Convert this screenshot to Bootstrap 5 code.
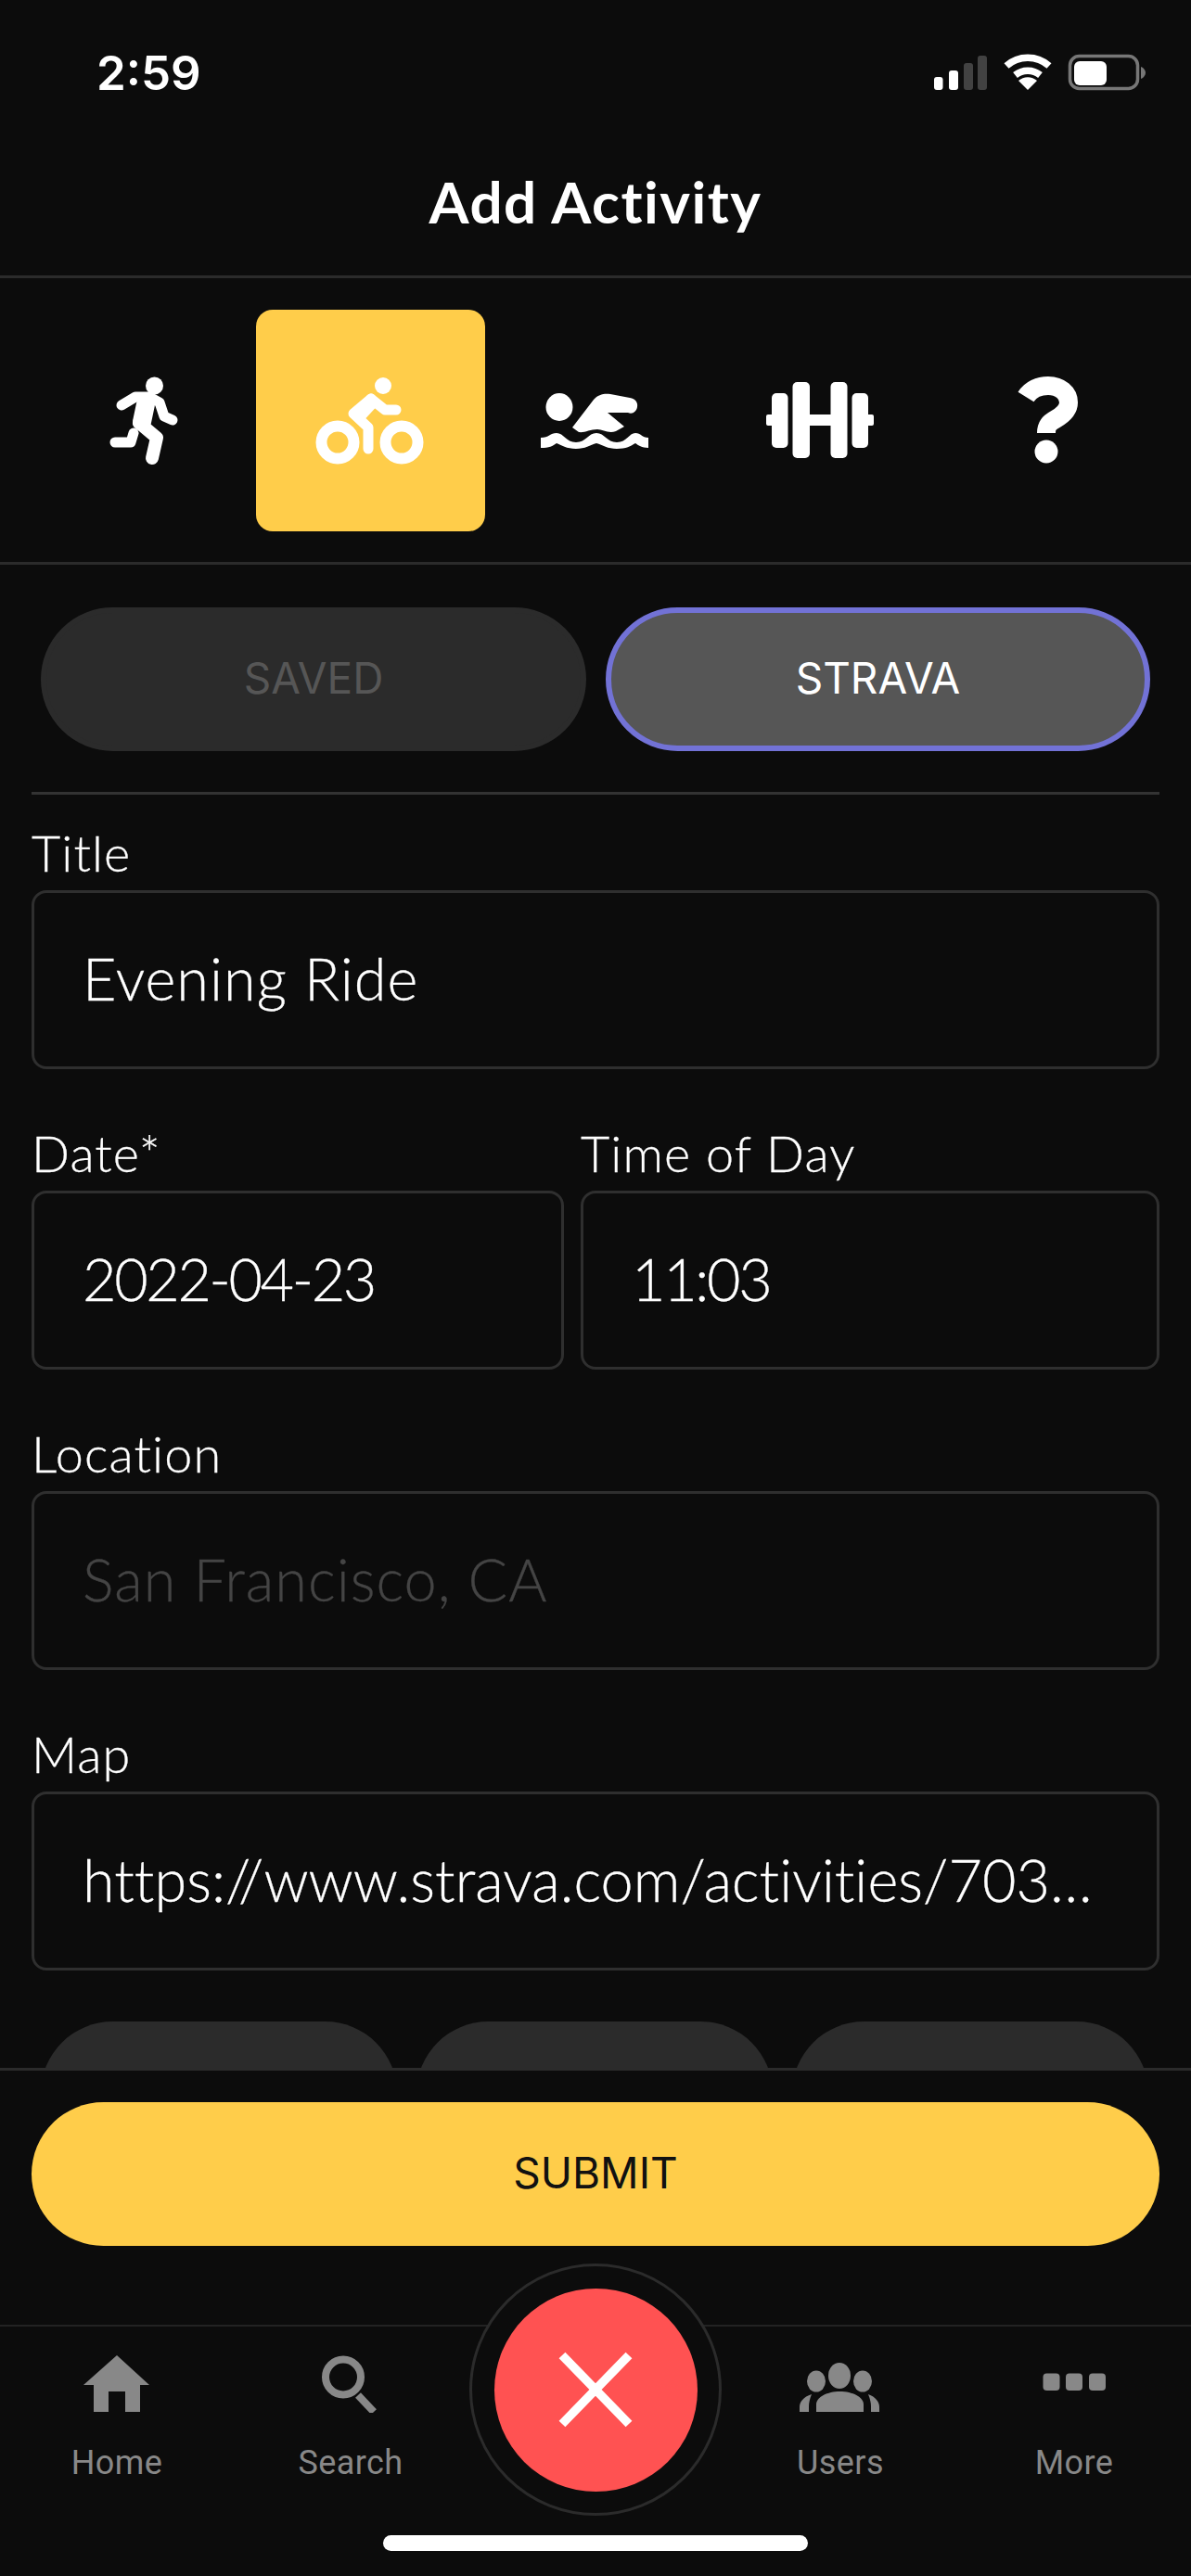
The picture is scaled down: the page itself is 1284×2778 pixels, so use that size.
<!DOCTYPE html>
<html lang="en">
<head>
  <meta charset="UTF-8">
  <title>Add Activity</title>
  <link rel="stylesheet" href="https://cdn.jsdelivr.net/npm/bootstrap@5.3.0/dist/css/bootstrap.min.css">
  <style>
    body { background: #0c0c0c; color: #fff; font-family: "Lato", sans-serif; }
    .app-screen { width: 1284px; height: 2778px; overflow: hidden; background: #0c0c0c; }
    .status-row { height: 157px; padding: 0 48px 0 104px; }
    .status-time { font: 600 51px/1 "Inter", sans-serif; }
    .page-title { height: 143px; margin: 0; padding-bottom: 20px; font: 700 62px/120px "Lato", sans-serif; letter-spacing: 1.5px; text-align: center; border-bottom: 3px solid #2b2b2b; }
    .type-row { display: grid; grid-template-columns: 244px 247px repeat(3, 243px); height: 309px; padding: 34px 32px 33px; border-bottom: 3px solid #2b2b2b; }
    .type-tile { height: 239px; padding: 0; border: 0; border-radius: 18px; background: transparent; }
    .type-tile.is-active { background: #ffcd4a; }
    .form-area { min-height: 0; padding: 46px 34px 0; }
    .source-pill { height: 155px; padding: 0 0 3px; font: 400 46px/1 "Inter", sans-serif; border-width: 6px; }
    .source-saved, .source-saved:disabled { width: 588px; margin-left: 10px; color: #565656; background: #2b2b2b; border-color: #2b2b2b; opacity: 1; }
    .source-strava { width: 587px; margin-right: 10px; color: #fff; background: #565656; border-color: #7272d6; }
    .form-rule { margin: 44px 0 29px; border-top: 3px solid #333; opacity: 1; }
    .field-label { height: 68px; margin-bottom: 6px; font: 300 54px/68px "Lato", sans-serif; font-variant-ligatures: none; letter-spacing: 1.1px; -webkit-text-stroke: .3px #fff; color: #fff; }
    .field-box, .field-box:focus { height: 193px; padding: 0 52px 5px; font: 300 63px/1 "Lato", sans-serif; font-variant-ligatures: none; letter-spacing: 1px; -webkit-text-stroke: .3px currentColor; white-space: nowrap; color: #fff; background: #0c0c0c; border: 3px solid #2f2f2f; border-radius: 16px; }
    .field-box.is-empty { color: #444; }
    .field-box.is-numeric { letter-spacing: -2.4px; }
    .field-box.is-url { letter-spacing: 0; }
    .field-gap { margin-bottom: 57px; }
    .date-col { width: 574px; }
    .time-col { width: 624px; }
    .extra-row { margin-top: -2px; padding: 0 12px 0 10px; }
    .extra-pill { width: 384px; height: 155px; background: #2b2b2b; border: 0; }
    .footer-bar { padding: 34px 34px 85px; border-top: 3px solid #2b2b2b; }
    .submit-btn, .submit-btn:hover { height: 155px; padding: 0 0 3px; font: 400 46px/1 "Inter", sans-serif; color: #111; background: #ffcd4a; border: 0; }
    .tab-bar { display: grid; grid-template-columns: 252px 252px 276px 252px 252px; border-top: 2px solid #232323; }
    .tab-item { padding-top: 31px; color: #888; font: 400 36px/44px "Roboto", sans-serif; letter-spacing: .4px; text-align: center; }
    .tab-item svg { display: block; margin-bottom: 32px; }
    .fab-slot { position: relative; }
    .fab-ring { position: absolute; top: -68px; left: 2px; width: 272px; height: 272px; background: #0c0c0c; border: 3px solid #2b2b2b; }
    .fab-btn { width: 219px; height: 219px; padding: 0; background: #ff5252; border: 0; }
    .home-bar { width: 458px; height: 18px; margin: 56px auto 27px; background: #fff; }
  </style>
</head>
<body>
  <div class="app-screen d-flex flex-column">

    <div class="status-row d-flex justify-content-between align-items-center">
      <span class="status-time">2:59</span>
      <svg width="240" height="157" viewBox="996 0 240 157" aria-hidden="true">
        <rect x="1007" y="83" width="9.500" height="14" rx="3" fill="#fff"/>
        <rect x="1023" y="76" width="10" height="21" rx="3" fill="#fff"/>
        <rect x="1039" y="68" width="10" height="29" rx="3" fill="#424242"/>
        <rect x="1054" y="60" width="10" height="37" rx="3" fill="#424242"/>
        <path d="M1085 71A34.500 34.500 0 0 1 1131 71M1094.500 81A21.500 21.500 0 0 1 1121.500 81" fill="none" stroke="#fff" stroke-width="7.500"/>
        <path d="M1108 97L1098 87A15 15 0 0 1 1118 87Z" fill="#fff"/>
        <rect x="1153.500" y="60.500" width="73" height="35" rx="10" fill="none" stroke="#777" stroke-width="3.500"/>
        <rect x="1158" y="66" width="35" height="26" rx="6" fill="#fff"/>
        <path d="M1230 72C1233 73 1235 76 1235 78.500C1235 81 1233 84 1230 85Z" fill="#777"/>
      </svg>
    </div>

    <h1 class="page-title">Add Activity</h1>

    <div class="type-row">
      <button class="type-tile" type="button" aria-label="Run">
        <svg class="d-block" width="244" height="239" viewBox="32 334 244 239">
          <circle cx="166.500" cy="416" r="9.500" fill="#fff"/>
          <g fill="none" stroke="#fff" stroke-linecap="round" stroke-linejoin="round">
            <path d="M131 437L146 428H161L172 434L177 449L186 453" stroke-width="11"/>
            <path d="M158 433L150 456L169 472L164 494" stroke-width="14"/>
            <path d="M124 477H141L144 467" stroke-width="11"/>
            <path d="M157 436L153 455" stroke-width="20"/>
          </g>
        </svg>
      </button>
      <button class="type-tile is-active" type="button" aria-label="Ride">
        <svg class="d-block" width="247" height="239" viewBox="276 334 247 239">
          <circle cx="413" cy="416" r="9" fill="#fff"/>
          <g fill="none" stroke="#fff">
            <circle cx="364" cy="477" r="17.500" stroke-width="12"/>
            <circle cx="433" cy="477" r="17.500" stroke-width="12"/>
            <g stroke-linecap="round" stroke-linejoin="round">
              <path d="M400 430L381 446L397 461V484" stroke-width="11"/>
              <path d="M400 430L415 442H427" stroke-width="11"/>
              <path d="M400 434L388 447" stroke-width="15"/>
            </g>
          </g>
        </svg>
      </button>
      <button class="type-tile" type="button" aria-label="Swim">
        <svg class="d-block" width="243" height="239" viewBox="523 334 243 239">
          <ellipse cx="603" cy="439" rx="14.500" ry="15" fill="#fff"/>
          <path d="M617 461L640 431C645 425 652 424 658 425L679 429C685 430 688 434 687 439C686 444 682 447 677 445L655 445L673 460L664 465C656 468 650 463 644 463C636 463 630 467 624 466Z" fill="#fff"/>
          <path d="M583 472C592 472 593 467 600 467C608 467 610 477 621 477C632 477 634 467 643 467C652 467 654 477 665 477C676 477 678 467 685 467C691 467 692 472 699 472V483C692 483 688 480 685 478C680 481 675 484 665 484C655 484 650 480 643 478C636 480 631 484 621 484C611 484 605 480 600 478C596 481 592 483 583 483Z" fill="#fff"/>
        </svg>
      </button>
      <button class="type-tile" type="button" aria-label="Workout">
        <svg class="d-block" width="243" height="239" viewBox="766 334 243 239">
          <g fill="#fff">
            <rect x="826" y="447" width="8" height="12" rx="2"/>
            <rect x="934" y="447" width="8" height="12" rx="2"/>
            <rect x="870" y="447" width="28" height="12"/>
            <rect x="832" y="424" width="17.500" height="59" rx="5"/>
            <rect x="854.500" y="412" width="18.500" height="82" rx="5"/>
            <rect x="895.500" y="412" width="18" height="82" rx="5"/>
            <rect x="918.500" y="424" width="17.500" height="59" rx="5"/>
          </g>
        </svg>
      </button>
      <button class="type-tile" type="button" aria-label="Other">
        <svg class="d-block" width="243" height="239" viewBox="1009 334 243 239">
          <path d="M1106 428C1111 420 1120 416 1130 416C1143 416 1152 424 1152 434C1152 443 1145 448 1138 452C1131 456 1128 459 1128 467" fill="none" stroke="#fff" stroke-width="20" stroke-linejoin="round"/>
          <circle cx="1128" cy="487" r="12.500" fill="#fff"/>
        </svg>
      </button>
    </div>

    <div class="form-area flex-grow-1 overflow-hidden">
      <div class="d-flex">
        <button class="btn rounded-pill source-pill source-saved" type="button" disabled>SAVED</button>
        <button class="btn rounded-pill source-pill source-strava ms-auto" type="button">STRAVA</button>
      </div>
      <hr class="form-rule">

      <div class="field-gap">
        <label class="field-label d-block">Title</label>
        <div class="form-control field-box d-flex align-items-center">Evening Ride</div>
      </div>

      <div class="field-gap d-flex justify-content-between">
        <div class="date-col">
          <label class="field-label d-block">Date*</label>
          <div class="form-control field-box is-numeric d-flex align-items-center">2022-04-23</div>
        </div>
        <div class="time-col">
          <label class="field-label d-block">Time of Day</label>
          <div class="form-control field-box is-numeric d-flex align-items-center">11:03</div>
        </div>
      </div>

      <div class="field-gap">
        <label class="field-label d-block">Location</label>
        <div class="form-control field-box is-empty d-flex align-items-center">San Francisco, CA</div>
      </div>

      <div class="field-gap">
        <label class="field-label d-block">Map</label>
        <div class="form-control field-box is-url d-flex align-items-center">https://www.strava.com/activities/703…</div>
      </div>

      <div class="extra-row d-flex justify-content-between">
        <div class="extra-pill rounded-pill"></div>
        <div class="extra-pill rounded-pill"></div>
        <div class="extra-pill rounded-pill"></div>
      </div>
    </div>

    <div class="footer-bar">
      <button class="btn rounded-pill submit-btn w-100" type="button">SUBMIT</button>
    </div>

    <nav class="tab-bar">
      <div class="tab-item">
        <svg width="252" height="62" viewBox="0 2539 252 62" fill="#888">
          <path d="M126 2539L161 2571H151V2600H135V2578H117V2600H101V2571H90Z"/>
        </svg>
        Home
      </div>
      <div class="tab-item">
        <svg width="252" height="62" viewBox="252 2539 252 62" fill="none" stroke="#888" stroke-width="8">
          <circle cx="370" cy="2562.500" r="19"/>
          <path d="M386 2582L403 2600"/>
        </svg>
        Search
      </div>
      <div class="fab-slot">
        <div class="fab-ring rounded-circle d-flex align-items-center justify-content-center">
          <button class="fab-btn rounded-circle d-flex align-items-center justify-content-center" type="button" aria-label="Close">
            <svg width="84" height="84" viewBox="0 0 84 84">
              <path d="M6 5L78 79M78 5L6 79" fill="none" stroke="#fff" stroke-width="9.500"/>
            </svg>
          </button>
        </div>
      </div>
      <div class="tab-item">
        <svg width="252" height="62" viewBox="780 2539 252 62" fill="#888">
          <ellipse cx="905" cy="2561" rx="12" ry="14"/>
          <ellipse cx="880" cy="2567" rx="10" ry="11.500"/>
          <ellipse cx="930" cy="2567" rx="10" ry="11.500"/>
          <path d="M880 2600V2592C880 2584 892 2578 905.500 2578C919 2578 931 2584 931 2592V2600Z"/>
          <path d="M862 2600V2595C862 2589 866 2584 875 2581C873 2586 872 2590 872 2594V2600Z"/>
          <path d="M948 2600V2595C948 2589 944 2584 936 2581C938 2586 939 2590 939 2594V2600Z"/>
        </svg>
        Users
      </div>
      <div class="tab-item">
        <svg width="252" height="62" viewBox="1032 2539 252 62" fill="#888">
          <rect x="1124.500" y="2558.500" width="18" height="18.500" rx="4"/>
          <rect x="1149" y="2558.500" width="18" height="18.500" rx="4"/>
          <rect x="1174" y="2558.500" width="18" height="18.500" rx="4"/>
        </svg>
        More
      </div>
    </nav>
    <div class="home-bar rounded-pill"></div>
  </div>
</body>
</html>
